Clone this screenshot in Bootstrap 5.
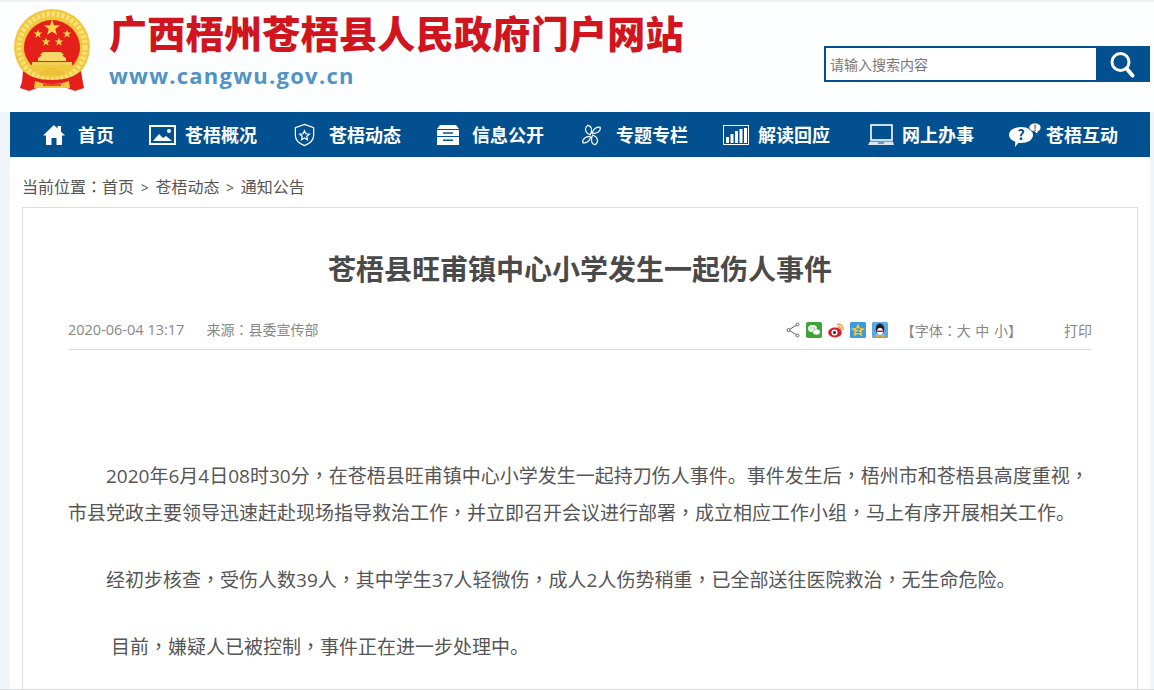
<!DOCTYPE html>
<html lang="zh-CN">
<head>
  <meta charset="UTF-8" />
  <meta name="viewport" content="width=device-width, initial-scale=1.0" />
  <title>苍梧县旺甫镇中心小学发生一起伤人事件</title>
  <link href="https://cdn.jsdelivr.net/npm/bootstrap@5.3.2/dist/css/bootstrap.min.css" rel="stylesheet" />
  <style>
    html, body {
      height: 690px;
      overflow: hidden;
    }

    body {
      background: #f0f5fb;
      font-family: "Open Sans", "Noto Sans CJK SC", sans-serif;
      color: #555;
    }

    /* the picture's punctuation sits centred in its cell, as in the TC face */
    .pun {
      font-family: "Noto Sans CJK TC", sans-serif;
      font-feature-settings: "locl" 0;
      line-height: 1;
    }

    .top-head {
      height: 112px;
      background: #fdfeff;
      border-top: 2px solid #eef2f8;
      padding: 7px 4px 0 13px;
    }

    .emblem {
      width: 78px;
      height: 82px;
      flex: none;
    }

    .brand-text {
      margin-left: 18px;
    }

    .site-name {
      font-family: "Noto Sans CJK SC", sans-serif;
      font-size: 38px;
      font-weight: 900;
      line-height: 50px;
      letter-spacing: .33px;
      color: #d0151f;
      margin-top: -2px;
      white-space: nowrap;
    }

    .site-url {
      font-family: "Open Sans", sans-serif;
      font-size: 22px;
      font-weight: 700;
      line-height: 30px;
      letter-spacing: 1.25px;
      color: #5093c4;
      margin-top: 3px;
    }

    .search-box {
      width: 326px;
      height: 36px;
      border: 2px solid #02508f;
      margin-top: 37px;
      background: #fff;
    }

    .search-input {
      border: 0;
      outline: 0;
      padding: 0 4px;
      font-size: 14px;
      font-family: "Noto Sans CJK SC", sans-serif;
      min-width: 0;
    }

    .search-input::placeholder {
      color: #777;
    }

    .search-btn {
      width: 52px;
      background: #02508f;
      border: 0;
      padding: 0;
    }

    .page-wrap {
      margin: 0 4px 0 10px;
      background: #fff;
      height: 577px;
      overflow: hidden;
    }

    .main-nav {
      height: 45px;
      background: #02508f;
      padding-left: 32px;
      gap: 35px;
    }

    .main-nav a {
      color: #fff;
      text-decoration: none;
      font-family: "Noto Sans CJK SC", sans-serif;
      font-size: 18px;
      font-weight: 700;
      white-space: nowrap;
      gap: 12px;
    }

    .main-nav a.gap-narrow {
      gap: 8px;
    }

    .main-nav a.gap-slim {
      gap: 5px;
    }

    .crumbs {
      height: 40px;
      padding: 20px 0 0 12px;
      font-size: 16px;
      line-height: 20px;
      color: #555;
    }

    .crumbs i {
      font-style: normal;
      font-size: 14px;
      margin: 0 2.500px;
    }

    .article-box {
      margin: 10px 12px 0;
      background: #fff;
      border: 1px solid #ddd;
      border-bottom: 0;
      padding: 0 45px;
      height: 483px;
      overflow: hidden;
    }

    .article-title {
      font-family: "Noto Sans CJK SC", sans-serif;
      font-size: 28px;
      font-weight: 700;
      line-height: 40px;
      color: #4a4a4a;
      text-align: center;
      margin: 40px 0 0;
    }

    .article-meta {
      height: 31px;
      margin-top: 31px;
      border-bottom: 1px solid #ddd;
      padding-bottom: 8px;
      font-size: 14px;
      color: #888;
    }

    .meta-date {
      font-size: 14.500px;
      margin-right: 22px;
    }

    .share-icons {
      gap: 6px;
    }

    .font-size-switch {
      margin: 0 42px 0 13px;
      word-spacing: 1px;
    }

    .article-body {
      padding-top: 108px;
      font-size: 19px;
      line-height: 37px;
      color: #555;
    }

    .article-body p {
      margin: 0 0 30px;
    }

    .page-end {
      height: 1px;
      background: #d8d8d8;
    }
  </style>
</head>
<body>
  <header class="top-head d-flex justify-content-between">
    <div class="d-flex">
      <svg class="emblem" viewBox="0 0 78 82">
        <defs>
          <polygon id="st" points="0,-10 2.350,-3.240 9.510,-3.090 3.800,1.240 5.880,8.090 0,4 -5.880,8.090 -3.800,1.240 -9.510,-3.090 -2.350,-3.240"/>
        </defs>
        <circle cx="39" cy="34" r="38" fill="#f1c93f" transform="translate(0 4)"/>
        <circle cx="39" cy="38" r="33" fill="none" stroke="#f9e27c" stroke-width="5" stroke-dasharray="3 2"/>
        <path d="M11 39a28 28 0 1 1 56 0c0 7-4 13-7 17H18c-3-4-7-10-7-17z" fill="#e5201a"/>
        <use href="#st" fill="#fbd94a" transform="translate(39 19) scale(.85)"/>
        <use href="#st" fill="#fbd94a" transform="translate(25 25) scale(.45)"/>
        <use href="#st" fill="#fbd94a" transform="translate(54 25) scale(.45)"/>
        <use href="#st" fill="#fbd94a" transform="translate(33 33) scale(.45)"/>
        <use href="#st" fill="#fbd94a" transform="translate(46 33) scale(.45)"/>
        <path d="M27 46l3-3h18l3 3-2 .5 4 2.500v3h-28v-3l4-2.500z" fill="#f6d96a"/>
        <path d="M19 53h40v3H19z" fill="#f3cf55"/>
        <path d="M26 64c3-1 3-4 7-3 2-3 10-3 12 0 4-1 4 2 7 3v2H26z" fill="#eebf38"/>
        <path d="M10 62c7 6 16 9 29 9s22-3 29-9l2 12 1 5-9 3-8-3H24l-8 3-9-3 2-6z" fill="#e5201a"/>
        <path d="M22 72c10 4 24 4 34 0l1 7H21z" fill="#f2c640"/>
        <path d="M30 76h18" stroke="#e5201a" stroke-width="1.500"/>
      </svg>
      <div class="brand-text">
        <div class="site-name">广西梧州苍梧县人民政府门户网站</div>
        <div class="site-url">www.cangwu.gov.cn</div>
      </div>
    </div>
    <form class="search-box d-flex">
      <input class="search-input flex-grow-1" type="text" placeholder="请输入搜索内容" />
      <button class="search-btn d-flex align-items-center justify-content-center" type="button" aria-label="搜索">
        <svg width="30" height="30" viewBox="0 0 30 30" fill="none" stroke="#fff"><circle cx="13.500" cy="13" r="8.500" stroke-width="3"/><path d="M19.500 19.500l6 7" stroke-width="4" stroke-linecap="round"/></svg>
      </button>
    </form>
  </header>

  <div class="page-wrap">
    <nav class="main-nav d-flex align-items-center">
      <a class="d-flex align-items-center" href="#">
        <svg width="24" height="22" viewBox="0 0 24 22" fill="#fff"><path d="M12 1L1 11.500h3V21h5.500v-7h5v7H20v-9.500h3l-4-3.800V2h-3.500v2.500z"/></svg>
        <span>首页</span>
      </a>
      <a class="d-flex align-items-center gap-narrow" href="#">
        <svg width="28" height="20" viewBox="0 0 28 20"><rect x="1" y="1" width="25" height="18" fill="none" stroke="#fff" stroke-width="2"/><path d="M4 16l6-7 4 4 3-2 6 5z" fill="#fff"/><circle cx="20" cy="6" r="2" fill="#fff"/></svg>
        <span>苍梧概况</span>
      </a>
      <a class="d-flex align-items-center" href="#">
        <svg width="25" height="26" viewBox="0 0 26 26" fill="none" stroke="#fff" stroke-width="1.300"><path d="M13 2l9.500 3.500v8c0 5-4.500 8.500-9.500 10.500-5-2-9.500-5.500-9.500-10.500v-8z"/><path d="M13 8.500l1.500 3.200 3.500.4-2.600 2.300.7 3.500-3.100-1.700-3.100 1.700.7-3.500-2.600-2.300 3.500-.4z"/></svg>
        <span>苍梧动态</span>
      </a>
      <a class="d-flex align-items-center" href="#">
        <svg width="24" height="22" viewBox="0 0 24 22" fill="#fff"><path d="M4 1h16l3 4H1z"/><path d="M1 6h22v6H1zM7 8.200v1.600h10V8.200z" fill-rule="evenodd"/><path d="M1 13h22v8H1zM7 15.500v1.600h10v-1.600z" fill-rule="evenodd"/></svg>
        <span>信息公开</span>
      </a>
      <a class="d-flex align-items-center" href="#">
        <svg width="25" height="26" viewBox="0 0 28 26" fill="none" stroke="#fff" stroke-width="1.300"><g transform="rotate(-42 14 13)"><path d="M13 12C10 6 13 2 18 2c3 3 1 8-5 10zM15 14c3 6 0 10-5 10-3-3-1-8 5-10zM12 14c-4 3-9 2-11-1 2-4 8-3 11 1zM16 12c4-3 9-2 11 1-2 4-8 3-11-1z"/></g></svg>
        <span>专题专栏</span>
      </a>
      <a class="d-flex align-items-center gap-narrow" href="#">
        <svg width="27" height="20" viewBox="0 0 27 20" fill="#fff"><rect x=".5" y=".5" width="25" height="19" fill="none" stroke="#fff"/><path d="M3 12h3v6H3zM7.500 9h3v9h-3zM12 6h3v12h-3zM16.500 4h3v14h-3zM21 3h3v15h-3z"/></svg>
        <span>解读回应</span>
      </a>
      <a class="d-flex align-items-center gap-narrow" href="#">
        <svg width="29" height="22" viewBox="0 0 29 22" fill="none"><rect x="6" y="1" width="21" height="15" stroke="#fff" stroke-width="1.600"/><path d="M5 17.500h23l1 3.500H3z" fill="#d9e6f2"/><path d="M13 19h6" stroke="#02508f"/></svg>
        <span>网上办事</span>
      </a>
      <a class="d-flex align-items-center gap-slim" href="#">
        <svg width="32" height="24" viewBox="0 0 32 24" fill="#fff"><path d="M12 4c6.500 0 12 3 12 8s-5.500 8-12 8c-.8 0-1.600 0-2.400-.2L6 24l.3-5.200C2.500 17.300 0 15 0 12c0-5 5.500-8 12-8z"/><path d="M26 0c3 0 6 2 6 4.500 0 2-1.500 3.500-3 4l-.5 3-3-3c-3 0-5.500-1.800-5.500-4C20 2 23 0 26 0z" stroke="#02508f" stroke-width=".8"/><text x="12" y="17" font-size="14" font-weight="700" text-anchor="middle" fill="#02508f">?</text><text x="26" y="8" font-size="8" font-weight="700" text-anchor="middle" fill="#02508f">!</text></svg>
        <span>苍梧互动</span>
      </a>
    </nav>

    <div class="crumbs">当前位置<span class="pun">：</span>首页 <i>&gt;</i> 苍梧动态 <i>&gt;</i> 通知公告</div>

    <main class="article-box">
      <h1 class="article-title">苍梧县旺甫镇中心小学发生一起伤人事件</h1>
      <div class="article-meta d-flex justify-content-between align-items-center">
        <div><span class="meta-date">2020-06-04 13:17</span><span>来源<span class="pun">：</span>县委宣传部</span></div>
        <div class="d-flex align-items-center">
          <div class="share-icons d-flex align-items-center">
            <svg width="14" height="16" viewBox="0 0 14 16" fill="none" stroke="#666"><path d="M11.500 2.500L2.500 8l9 5.500"/><circle cx="11.500" cy="2.500" r="1.500" fill="#fff"/><circle cx="2.500" cy="8" r="1.500" fill="#fff"/><circle cx="11.500" cy="13.500" r="1.500" fill="#fff"/></svg>
            <svg width="16" height="16" viewBox="0 0 16 16"><rect width="16" height="16" rx="2" fill="#3ca53a"/><ellipse cx="6.500" cy="6.500" rx="4.500" ry="3.500" fill="#fff"/><ellipse cx="10.500" cy="10" rx="3.800" ry="3" fill="#fff" stroke="#3ca53a" stroke-width=".6"/><circle cx="5" cy="6" r=".7" fill="#3ca53a"/><circle cx="8" cy="6" r=".7" fill="#3ca53a"/></svg>
            <svg width="16" height="16" viewBox="0 0 16 16"><ellipse cx="7" cy="10.500" rx="6.800" ry="5" fill="#d5222a"/><circle cx="6.500" cy="10.500" r="3" fill="#fff"/><circle cx="6.500" cy="10.500" r="1.500" fill="#222"/><path d="M9 2.500c3.500-1 6.500 1.500 6 5.500M9.500 5c2-.5 3.500 1 3.200 3" fill="none" stroke="#e8942c" stroke-width="1.300"/></svg>
            <svg width="16" height="16" viewBox="0 0 16 16"><rect width="16" height="16" rx="1.500" fill="#3c9be0"/><path d="M8 1.500l2 4.500 5 .4-3.800 3.100 1.200 5L8 11.800l-4.400 2.700 1.200-5L1 6.400 6 6z" fill="#f7c92f"/><path d="M6 7h4l-3.500 3.500H10" fill="none" stroke="#3c7fc0"/></svg>
            <svg width="16" height="16" viewBox="0 0 16 16"><rect width="16" height="16" rx="1.500" fill="#5aa7e6"/><ellipse cx="8" cy="7" rx="4.200" ry="5.500" fill="#222"/><ellipse cx="8" cy="9.500" rx="3" ry="3.500" fill="#fff"/><path d="M4.500 8.500h7l-1 1.500h-5z" fill="#d5222a"/><ellipse cx="5" cy="14" rx="2.500" ry="1.200" fill="#f4a62a"/><ellipse cx="11" cy="14" rx="2.500" ry="1.200" fill="#f4a62a"/></svg>
          </div>
          <span class="font-size-switch">【字体<span class="pun">：</span>大 中 小】</span>
          <span>打印</span>
        </div>
      </div>
      <div class="article-body">
        <p>　　2020年6月4日08时30分<span class="pun">，</span>在苍梧县旺甫镇中心小学发生一起持刀伤人事件。事件发生后<span class="pun">，</span>梧州市和苍梧县高度重视<span class="pun">，</span>市县党政主要领导迅速赶赴现场指导救治工作<span class="pun">，</span>并立即召开会议进行部署<span class="pun">，</span>成立相应工作小组<span class="pun">，</span>马上有序开展相关工作。</p>
        <p>　　经初步核查<span class="pun">，</span>受伤人数39人<span class="pun">，</span>其中学生37人轻微伤<span class="pun">，</span>成人2人伤势稍重<span class="pun">，</span>已全部送往医院救治<span class="pun">，</span>无生命危险。</p>
        <p>　　 目前<span class="pun">，</span>嫌疑人已被控制<span class="pun">，</span>事件正在进一步处理中。</p>
      </div>
    </main>
  </div>
  <div class="page-end"></div>
</body>
</html>
